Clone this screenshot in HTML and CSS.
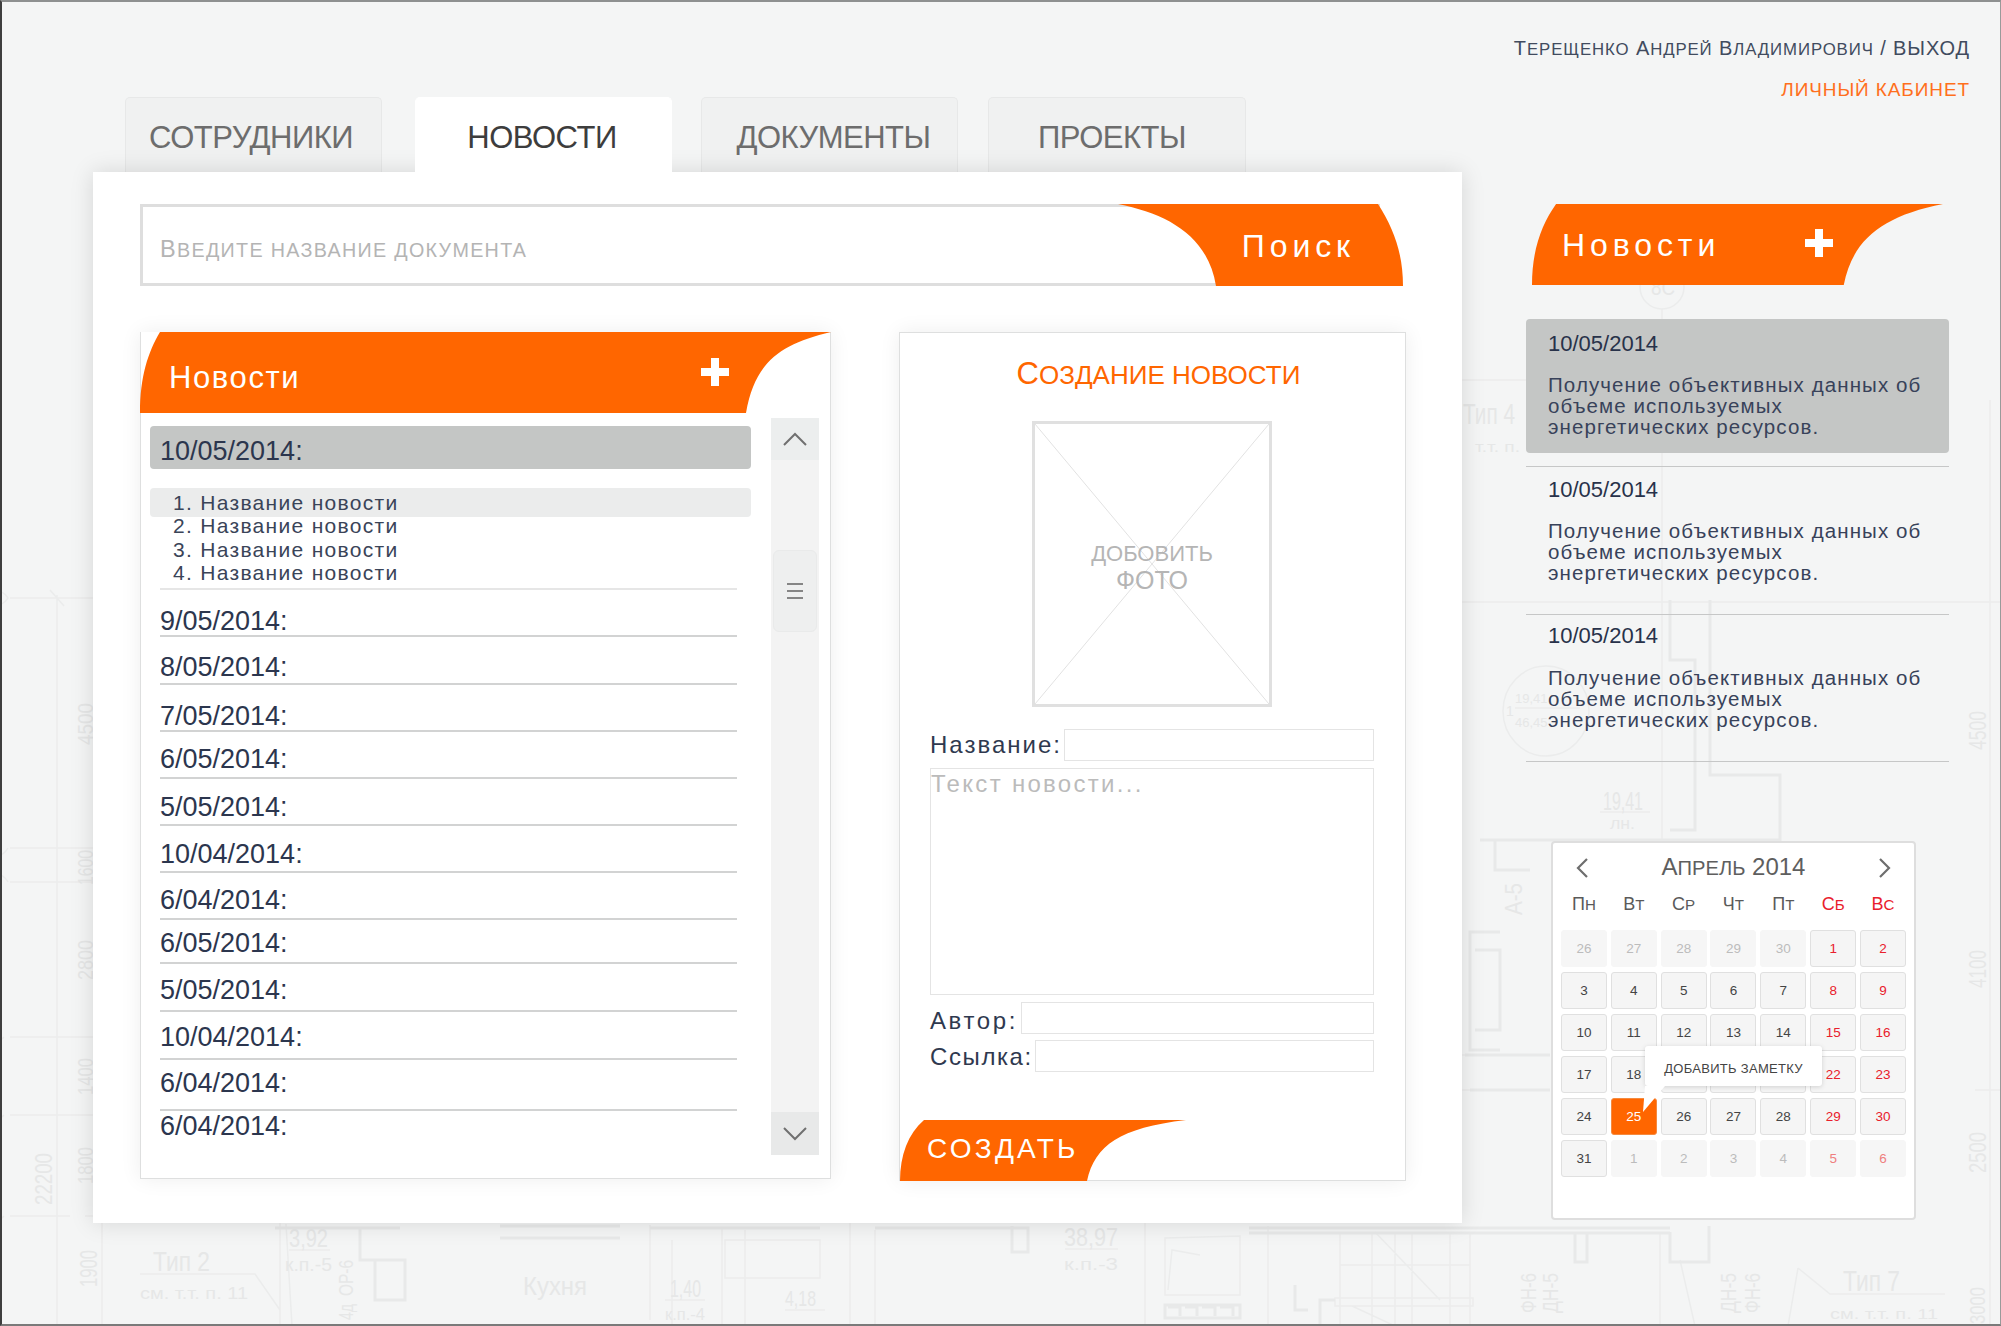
FILE: index.html
```html
<!DOCTYPE html>
<html lang="ru">
<head>
<meta charset="utf-8">
<title>Новости</title>
<link rel="stylesheet" href="styles.css">
</head>
<body>
<div class="page">
  <svg class="blueprint" viewBox="0 0 2001 1326" aria-hidden="true">
    <g class="bp-line">
      <path d="M57 595V1326M10 598H150M10 848H150M10 882H150M10 1037H150M10 1115H150M10 1216H70M85 1216H150M50 590L64 606"/>
      <path d="M-12 598a14 22 0 0 0 20 0a14 22 0 0 0-20 0M-12 848a14 24 0 0 0 20 0M-12 882a14 24 0 0 1 20 0M-6 1037a10 20 0 0 0 10 0M-6 1115a10 20 0 0 0 10 0M-6 1216a10 20 0 0 0 10 0"/>
      <path d="M102 1223V1326M140 1274H255L280 1310M280 1223V1326M286 1224L292 1326"/>
      <path d="M650 1225V1320M672 1240V1326M722 1228V1326M745 1230V1326M725 1240H820V1278H725ZM665 1300H705M785 1310H825M850 1223V1326M875 1230V1326"/>
      <path d="M289 1250H330M1065 1249H1118M1145 1223V1326M1165 1238L1240 1236V1295H1165ZM1200 1255L1172 1250L1168 1290M1268 1226V1326M1340 1232V1326M1372 1232V1326M1395 1232V1326M1412 1232V1326M1450 1232V1326M1470 1232V1326M1375 1232L1440 1300M1340 1265H1470M1335 1298H1473V1306H1335ZM1352 1306L1395 1326"/>
      <path d="M1798 1268L1830 1294H1945M1798 1268L1788 1326M1660 1232V1326M1680 1260L1695 1326M1990 1220V1326"/>
      <path d="M1662 309V880M1640 287a22 22 0 1 0 44 0a22 22 0 1 0-44 0M1503 711a43 45 0 1 0 86 0a43 45 0 1 0-86 0M1515 708H1580M1462 380H1540M1462 602H1990M1990 400V1240M1975 602H2000M1975 1090H2000"/>
      <path d="M1600 812H1650M1460 1090H1530M1460 1055H1550"/>
    </g>
    <g class="bp-wall">
      <path d="M1670 600V660H1695V830H1670M1710 600V775H1780V842M1480 840H1780M1495 840V870H1530M1465 1055H1550M1470 1090H1550"/>
      <path d="M1500 932H1470V1050H1500M1475 950H1500V1030H1475"/>
      <path d="M275 1228H400M500 1226H620M500 1238H620M650 1228H820M875 1228H1000M1000 1228H1028V1252H1012V1226M1249 1233H1670M1249 1228H1670M1575 1232V1262H1587V1232M1670 1232V1262H1709V1226M1295 1285V1310H1308"/>
      <path d="M360 1228V1260H375M375 1260H405V1300H375V1260M1320 1326V1300H1335"/>
      <path d="M1165 1305H1240V1318H1165ZM1168 1307H1180V1316M1185 1307H1197V1316M1202 1307H1215V1316M1220 1307H1233V1316"/>
    </g>
    <g class="bp-text">
      <text x="-745" y="93" transform="rotate(-90)" font-size="22" textLength="42" lengthAdjust="spacingAndGlyphs">4500</text>
      <text x="-885" y="93" transform="rotate(-90)" font-size="22" textLength="35" lengthAdjust="spacingAndGlyphs">1600</text>
      <text x="-980" y="93" transform="rotate(-90)" font-size="22" textLength="40" lengthAdjust="spacingAndGlyphs">2800</text>
      <text x="-1095" y="93" transform="rotate(-90)" font-size="22" textLength="37" lengthAdjust="spacingAndGlyphs">1400</text>
      <text x="-1184" y="93" transform="rotate(-90)" font-size="22" textLength="37" lengthAdjust="spacingAndGlyphs">1800</text>
      <text x="-1205" y="52" transform="rotate(-90)" font-size="24" textLength="52" lengthAdjust="spacingAndGlyphs">22200</text>
      <text x="-1287" y="97" transform="rotate(-90)" font-size="24" textLength="37" lengthAdjust="spacingAndGlyphs">1900</text>
      <text x="153" y="1271" font-size="28" textLength="57" lengthAdjust="spacingAndGlyphs">Тип 2</text>
      <text x="140" y="1299" font-size="16" textLength="108" lengthAdjust="spacingAndGlyphs">см. т.т. п. 11</text>
      <text x="289" y="1247" font-size="26" textLength="39" lengthAdjust="spacingAndGlyphs">3,92</text>
      <text x="285" y="1271" font-size="19" textLength="47" lengthAdjust="spacingAndGlyphs">к.п.-5</text>
      <text x="-1296" y="353" transform="rotate(-90)" font-size="20" textLength="36" lengthAdjust="spacingAndGlyphs">ОР-6</text>
      <text x="-1320" y="353" transform="rotate(-90)" font-size="20" textLength="16" lengthAdjust="spacingAndGlyphs">4д</text>
      <text x="523" y="1295" font-size="26" textLength="64" lengthAdjust="spacingAndGlyphs">Кухня</text>
      <text x="670" y="1297" font-size="23" textLength="31" lengthAdjust="spacingAndGlyphs">1,40</text>
      <text x="665" y="1320" font-size="16" textLength="40" lengthAdjust="spacingAndGlyphs">к.п.-4</text>
      <text x="785" y="1306" font-size="22" textLength="31" lengthAdjust="spacingAndGlyphs">4,18</text>
      <text x="1064" y="1246" font-size="25" textLength="54" lengthAdjust="spacingAndGlyphs">38,97</text>
      <text x="1064" y="1270" font-size="17" textLength="54" lengthAdjust="spacingAndGlyphs">к.п.-3</text>
      <text x="-1313" y="1536" transform="rotate(-90)" font-size="22" textLength="40" lengthAdjust="spacingAndGlyphs">ФН-6</text>
      <text x="-1313" y="1558" transform="rotate(-90)" font-size="22" textLength="40" lengthAdjust="spacingAndGlyphs">ДН-5</text>
      <text x="-1313" y="1736" transform="rotate(-90)" font-size="22" textLength="40" lengthAdjust="spacingAndGlyphs">ДН-5</text>
      <text x="-1313" y="1760" transform="rotate(-90)" font-size="22" textLength="40" lengthAdjust="spacingAndGlyphs">ФН-6</text>
      <text x="1843" y="1291" font-size="30" textLength="57" lengthAdjust="spacingAndGlyphs">Тип 7</text>
      <text x="1830" y="1319" font-size="15" textLength="108" lengthAdjust="spacingAndGlyphs">см. т.т. п. 11</text>
      <text x="-1324" y="1985" transform="rotate(-90)" font-size="22" textLength="37" lengthAdjust="spacingAndGlyphs">3000</text>
      <text x="1651" y="295" font-size="22" textLength="24" lengthAdjust="spacingAndGlyphs">8С</text>
      <text x="1463" y="424" font-size="30" textLength="52" lengthAdjust="spacingAndGlyphs">Тип 4</text>
      <text x="1475" y="452" font-size="15" textLength="45" lengthAdjust="spacingAndGlyphs">т.т. п.</text>
      <text x="1506" y="716" font-size="14">1</text>
      <text x="1515" y="703" font-size="13">19,41</text>
      <text x="1515" y="727" font-size="13">46,45</text>
      <text x="1603" y="810" font-size="26" textLength="40" lengthAdjust="spacingAndGlyphs">19,41</text>
      <text x="1610" y="829" font-size="16" textLength="25" lengthAdjust="spacingAndGlyphs">лн.</text>
      <text x="-750" y="1986" transform="rotate(-90)" font-size="24" textLength="39" lengthAdjust="spacingAndGlyphs">4500</text>
      <text x="-988" y="1986" transform="rotate(-90)" font-size="24" textLength="38" lengthAdjust="spacingAndGlyphs">4100</text>
      <text x="-1173" y="1986" transform="rotate(-90)" font-size="24" textLength="41" lengthAdjust="spacingAndGlyphs">2500</text>
      <text x="-915" y="1522" transform="rotate(-90)" font-size="24" textLength="32" lengthAdjust="spacingAndGlyphs">А-5</text>
    </g>
  </svg>

  <div class="main-col">
    <nav class="tabs">
      <a class="tab tab--first">СОТРУДНИКИ</a>
      <a class="tab tab--active">НОВОСТИ</a>
      <a class="tab tab--third">ДОКУМЕНТЫ</a>
      <a class="tab tab--last">ПРОЕКТЫ</a>
    </nav>
    <main class="panel">
      <div class="search">
        <div class="search-field"><span class="placeholder">В<span class="sm">ВЕДИТЕ НАЗВАНИЕ ДОКУМЕНТА</span></span></div>
        <div class="search-btn">
          <svg class="shape" viewBox="0 0 285 82" preserveAspectRatio="none"><path d="M0 0H260C276 25 285 50 285 82H98C90 32 50 10 0 0Z"/></svg>
          <span class="btn-label search-label">Поиск</span>
        </div>
      </div>
      <div class="columns">
        <section class="news-list">
          <header class="list-head">
            <svg class="shape" viewBox="0 0 691 81" preserveAspectRatio="none"><path d="M20 0H691C640 12 615 30 606 81H0C0 45 8 20 20 0Z"/></svg>
            <h2 class="list-title">Новости</h2>
            <svg class="plus" viewBox="0 0 28 28"><path d="M10 0H18V10H28V18H18V28H10V18H0V10H10Z"/></svg>
          </header>
          <div class="list-body">
            <div class="dates">
              <div class="date-sel">10/05/2014:</div>
              <ol class="sub">
                <li class="sub-item sub-item--on">1. Название новости</li>
                <li class="sub-item">2. Название новости</li>
                <li class="sub-item">3. Название новости</li>
                <li class="sub-item">4. Название новости</li>
              </ol>
              <div class="row rh47 pt16">9/05/2014:</div>
              <div class="row rh48 pt15">8/05/2014:</div>
              <div class="row rh47 pt16">7/05/2014:</div>
              <div class="row rh47 pt12">6/05/2014:</div>
              <div class="row rh47 pt13">5/05/2014:</div>
              <div class="row rh47 pt13">10/04/2014:</div>
              <div class="row rh47 pt12">6/04/2014:</div>
              <div class="row rh44 pt8">6/05/2014:</div>
              <div class="row rh48 pt11">5/05/2014:</div>
              <div class="row rh48 pt10">10/04/2014:</div>
              <div class="row rh51 pt8">6/04/2014:</div>
              <div class="row row--last">6/04/2014:</div>
            </div>
            <div class="scroll">
              <div class="scroll-btn">
                <svg class="chev" viewBox="0 0 24 14"><path d="M1 13L12 2L23 13"/></svg>
              </div>
              <div class="thumb"><i class="grip"></i><i class="grip"></i><i class="grip"></i></div>
              <div class="scroll-btn scroll-btn--down">
                <svg class="chev" viewBox="0 0 24 14"><path d="M1 1L12 12L23 1"/></svg>
              </div>
            </div>
          </div>
        </section>

        <section class="form">
          <h2 class="form-title">С<span class="sm">ОЗДАНИЕ НОВОСТИ</span></h2>
          <div class="photo">
            <svg class="photo-x" viewBox="0 0 100 100" preserveAspectRatio="none"><path d="M0 0L100 100M100 0L0 100"/></svg>
            <span class="photo-text">ДОБОВИТЬ<br><span class="photo-big">ФОТО</span></span>
          </div>
          <div class="field field--first"><label class="lbl">Название:</label><div class="inp"></div></div>
          <div class="area">Текст новости...</div>
          <div class="field field--a"><label class="lbl">Автор:</label><div class="inp"></div></div>
          <div class="field field--b"><label class="lbl">Ссылка:</label><div class="inp"></div></div>
          <div class="create">
            <svg class="shape" viewBox="0 0 286 61" preserveAspectRatio="none"><path d="M24 0H286C220 8 195 25 187 61H0C0 35 8 14 24 0Z"/></svg>
            <span class="btn-label create-label">СОЗДАТЬ</span>
          </div>
        </section>
      </div>
    </main>
  </div>

  <aside class="side">
    <div class="user">Т<span class="sm">ЕРЕЩЕНКО</span> А<span class="sm">НДРЕЙ</span> В<span class="sm">ЛАДИМИРОВИЧ</span> / ВЫХОД</div>
    <div class="cabinet">ЛИЧНЫЙ КАБИНЕТ</div>
    <div class="side-head">
      <svg class="shape" viewBox="0 0 410 81" preserveAspectRatio="none"><path d="M24 0H410C350 12 320 35 311 81H0C0 45 10 20 24 0Z"/></svg>
      <h2 class="side-title">Новости</h2>
      <svg class="plus side-plus" viewBox="0 0 28 28"><path d="M10 0H18V10H28V18H18V28H10V18H0V10H10Z"/></svg>
    </div>
    <article class="card card--on">
      <div class="card-date">10/05/2014</div>
      <p class="card-text">Получение объективных данных об объеме используемых энергетических ресурсов.</p>
    </article>
    <article class="card card--two">
      <div class="card-date">10/05/2014</div>
      <p class="card-text">Получение объективных данных об объеме используемых энергетических ресурсов.</p>
    </article>
    <article class="card card--three">
      <div class="card-date">10/05/2014</div>
      <p class="card-text">Получение объективных данных об объеме используемых энергетических ресурсов.</p>
    </article>

    <div class="calendar">
      <div class="cal-nav">
        <svg class="cal-arrow" viewBox="0 0 14 22"><path d="M12 2L3 11L12 20"/></svg>
        <div class="cal-title">А<span class="sm">ПРЕЛЬ</span> 2014</div>
        <svg class="cal-arrow" viewBox="0 0 14 22"><path d="M2 2L11 11L2 20"/></svg>
      </div>
      <div class="cal-grid cal-week">
        <span>П<span class="sm">Н</span></span><span>В<span class="sm">Т</span></span><span>С<span class="sm">Р</span></span><span>Ч<span class="sm">Т</span></span><span>П<span class="sm">Т</span></span><span class="red">С<span class="sm">Б</span></span><span class="red">В<span class="sm">С</span></span>
      </div>
      <div class="cal-grid cal-days">
        <span class="d off">26</span><span class="d off">27</span><span class="d off">28</span><span class="d off">29</span><span class="d off">30</span><span class="d red">1</span><span class="d red">2</span>
        <span class="d">3</span><span class="d">4</span><span class="d">5</span><span class="d">6</span><span class="d">7</span><span class="d red">8</span><span class="d red">9</span>
        <span class="d">10</span><span class="d">11</span><span class="d">12</span><span class="d">13</span><span class="d">14</span><span class="d red">15</span><span class="d red">16</span>
        <span class="d">17</span><span class="d">18</span><span class="d"></span><span class="d"></span><span class="d"></span><span class="d red">22</span><span class="d red">23</span>
        <span class="d">24</span><span class="d d--on">25</span><span class="d">26</span><span class="d">27</span><span class="d">28</span><span class="d red">29</span><span class="d red">30</span>
        <span class="d">31</span><span class="d off">1</span><span class="d off">2</span><span class="d off">3</span><span class="d off">4</span><span class="d off off-red">5</span><span class="d off off-red">6</span>
      </div>
      <div class="tip">ДОБАВИТЬ ЗАМЕТКУ</div>
    </div>
  </aside>
</div>
</body>
</html>
```

FILE: styles.css
```css
* { box-sizing: border-box; }
html, body { margin: 0; padding: 0; }
body {
  width: 2001px;
  height: 1326px;
  overflow: hidden;
  font-family: "Liberation Sans", Arial, sans-serif;
  color: #2c364e;
}
h2, p, ol { margin: 0; padding: 0; font-weight: normal; }
li { list-style: none; }

.page {
  position: relative;
  display: flex;
  width: 2001px;
  height: 1326px;
  background: #f4f5f5;
  border-top: 2px solid #8e9090;
  border-left: 2px solid #3e3e3e;
  border-bottom: 2px solid #7a7a7a;
  border-right: 1px solid #9a9a9a;
  overflow: hidden;
}

/* blueprint backdrop */
.blueprint { position: absolute; left: -2px; top: -2px; width: 2001px; height: 1326px; }
.bp-line { fill: none; stroke: #ebecec; stroke-width: 1.5; }
.bp-wall { fill: none; stroke: #e8e9e9; stroke-width: 3; }
.bp-text { fill: #e6e7e7; font-family: "Liberation Sans", sans-serif; }

/* main column */
.main-col { position: relative; width: 1369px; margin-left: 91px; padding-top: 95px; flex: none; }
.tabs { display: flex; gap: 29px; height: 75px; padding-left: 32px; align-items: flex-end; }
.tab {
  display: flex; align-items: center; justify-content: center;
  width: 257px; height: 75px; padding-top: 5px;
  background: #f0f1f1;
  border: 1px solid #e7e8e8; border-bottom: 0;
  border-radius: 5px 5px 0 0;
  font-size: 31px; letter-spacing: -.5px; color: #6d6d6d;
}
.tab--first { padding-right: 5px; }
.tab--active {
  position: relative; z-index: 3;
  margin-left: 4px; padding-right: 3px;
  background: #fff; border-color: #fff;
  color: #3d3d3d;
}
.tab--third { padding-left: 8px; }
.tab--last { width: 258px; margin-left: 1px; padding-right: 10px; }
.panel {
  position: relative; z-index: 2;
  width: 1369px; height: 1051px;
  padding: 32px 0 0 47px;
  background: #fff;
  box-shadow: 0 0 22px rgba(0, 0, 0, .13);
}

.shape { position: absolute; left: 0; top: 0; width: 100%; height: 100%; fill: #ff6600; }
.btn-label { position: relative; color: #fff; font-size: 30px; }
.sm { font-size: .84em; }

.search { position: relative; width: 1263px; height: 82px; }
.search-field {
  display: flex; align-items: center;
  width: 1240px; height: 82px; padding: 8px 0 0 17px;
  border: 3px solid #dedede; border-right: 0;
}
.placeholder { font-size: 23.5px; letter-spacing: 1.3px; color: #b4b4b4; }
.search-btn {
  position: absolute; right: 0; top: 0;
  display: flex; align-items: center; justify-content: flex-end;
  width: 285px; height: 82px; padding: 2px 48px 0 0;
}
.search-label { font-size: 32px; letter-spacing: 4.9px; }

.columns { display: flex; gap: 68px; margin-top: 46px; }

/* news list */
.news-list {
  width: 691px; height: 847px;
  background: #fff;
  border: 1px solid #dedfdf; border-top: 0;
  box-shadow: 0 0 20px rgba(0, 0, 0, .07);
}
.list-head { position: relative; display: flex; align-items: center; height: 81px; margin-left: -1px; margin-right: -1px; padding: 10px 0 0 29px; }
.list-title { position: relative; font-size: 31px; letter-spacing: 1.6px; color: #fff; }
.plus { position: absolute; fill: #fff; width: 28px; height: 28px; left: 561px; top: 26px; }
.list-body { display: flex; padding-left: 9px; }
.dates { width: 601px; padding-top: 13px; }
.date-sel {
  height: 43px; padding: 8px 0 0 10px;
  background: #c4c6c5; border-radius: 4px;
  font-size: 27px; line-height: 35px;
}
.sub { margin: 22px 0 0 10px; width: 577px; height: 99px; border-bottom: 2px solid #e6e6e6; }
.sub-item {
  position: relative; padding-left: 13px;
  height: 23.4px; line-height: 23.4px;
  font-size: 21px; letter-spacing: 1.3px; color: #3a4458;
}
.sub-item--on { isolation: isolate; }
.sub-item--on::before {
  content: ""; position: absolute; z-index: -1;
  left: -10px; width: 601px; top: -3px; height: 29px;
  background: #ebecec; border-radius: 4px;
}
.row {
  margin-left: 10px; width: 577px;
  font-size: 27px; line-height: 30px;
  border-bottom: 2px solid #d2d3d3;
}
.row--last { border-bottom: 0; }
.rh44 { height: 44px; } .rh47 { height: 47px; } .rh48 { height: 48px; } .rh51 { height: 51px; }
.pt8 { padding-top: 8px; } .pt10 { padding-top: 10px; } .pt11 { padding-top: 11px; } .pt12 { padding-top: 12px; }
.pt13 { padding-top: 13px; } .pt15 { padding-top: 15px; } .pt16 { padding-top: 16px; }

.scroll {
  display: flex; flex-direction: column;
  width: 48px; height: 737px; margin: 5px 0 0 20px;
  background: #f3f3f3;
}
.scroll-btn { display: flex; align-items: center; justify-content: center; height: 42px; background: #eceeee; flex: none; }
.scroll-btn--down { height: 43px; margin-top: auto; background: #e8e9e9; }
.chev { width: 24px; height: 14px; fill: none; stroke: #707070; stroke-width: 2; }
.thumb {
  display: flex; flex-direction: column; align-items: center; justify-content: center; gap: 5px;
  width: 44px; height: 82px; margin: 90px 0 0 2px;
  background: #eeefef; border: 1px solid #e9eaea; border-radius: 6px;
}
.grip { display: block; width: 16px; height: 2px; background: #858585; }

/* form */
.form {
  display: flex; flex-direction: column;
  width: 507px; height: 849px; padding: 0 31px 0 30px;
  background: #fff;
  border: 1px solid #dedfdf;
  box-shadow: 0 0 20px rgba(0, 0, 0, .07);
}
.form-title { margin: 21px 0 0 13px; height: 40px; line-height: 40px; text-align: center; font-size: 31px; color: #ff6600; white-space: nowrap; }
.photo {
  position: relative;
  display: flex; align-items: center; justify-content: center;
  width: 240px; height: 286px; margin: 27px 0 0 102px;
  border: 3px solid #e0e0e0;
  text-align: center;
}
.photo-x { position: absolute; left: 0; top: 0; width: 100%; height: 100%; fill: none; stroke: #e2e2e2; stroke-width: 1; }
.photo-x path { vector-effect: non-scaling-stroke; }
.photo-text { position: relative; font-size: 22px; line-height: 27px; color: #b5b5b5; margin-top: 6px; }
.photo-big { font-size: 25px; }
.field { display: flex; height: 32px; align-items: center; }
.field--first { margin-top: 22px; }
.field--a { margin-top: 7px; }
.field--b { margin-top: 6px; }
.lbl { font-size: 24px; letter-spacing: 2px; color: #2f394f; white-space: nowrap; margin-right: 2px; }
.inp { flex: 1; height: 32px; background: #fff; border: 1px solid #e4e4e4; }
.field--a .lbl { padding-top: 5px; letter-spacing: 2.6px; margin-right: 3px; }
.field--b .lbl { padding-top: 2px; letter-spacing: 1.6px; margin-right: 2px; }
.area {
  height: 227px; margin-top: 7px;
  border: 1px solid #e4e4e4;
  font-size: 24px; line-height: 30px; letter-spacing: 2.3px; color: #bbb;
}
.create {
  position: relative;
  display: flex; align-items: center;
  align-self: flex-start;
  width: 286px; height: 61px; margin: auto 0 -1px -30px; padding: 0 0 4px 27px;
}
.create-label { font-size: 28px; letter-spacing: 3.2px; }

/* side column */
.side { width: 444px; margin-left: 64px; padding-top: 32px; flex: none; position: relative; }
.user { height: 28px; line-height: 28px; margin-left: -40px; text-align: right; font-size: 20px; letter-spacing: .9px; color: #414b5e; white-space: nowrap; }
.cabinet { height: 28px; line-height: 28px; margin-top: 14px; text-align: right; font-size: 19px; letter-spacing: .9px; color: #ff6f1c; white-space: nowrap; }
.side-head { position: relative; display: flex; align-items: center; width: 411px; height: 81px; margin: 100px 0 0 6px; padding: 2px 0 0 30px; }
.side-title { position: relative; font-size: 32px; letter-spacing: 4.9px; color: #fff; }
.side-plus { left: 273px; top: 25px; }
.card { width: 423px; padding-left: 22px; border-bottom: 1px solid #c6c7c7; }
.card--on { height: 134px; margin-top: 34px; padding-top: 14px; background: #c4c6c5; border: 0; border-radius: 4px; }
.card--two { height: 149px; margin-top: 13px; padding-top: 12px; border-top: 1px solid #c6c7c7; }
.card--three { height: 147px; padding-top: 10px; }
.card-date { height: 22px; line-height: 22px; font-size: 22px; color: #28324a; }
.card-text { margin-top: 19px; font-size: 20.5px; line-height: 21px; letter-spacing: 1.1px; color: #38425a; width: 395px; }
.card--three .card-text { margin-top: 20px; }

/* calendar */
.calendar {
  position: relative;
  width: 365px; height: 379px; margin: 79px 0 0 25px; padding: 0 8px;
  background: #fff;
  border: 2px solid #dedede; border-radius: 4px;
}
.cal-nav { display: flex; align-items: center; justify-content: space-between; height: 44px; padding: 4px 14px 0; }
.cal-arrow { width: 14px; height: 22px; fill: none; stroke: #6e6e6e; stroke-width: 2.2; flex: none; margin-top: 2px; }
.cal-title { font-size: 24px; color: #5e5e5e; white-space: nowrap; }
.cal-grid { display: grid; grid-template-columns: repeat(7, 46px); column-gap: 3.83px; width: 345px; }
.cal-week { height: 44px; padding-top: 7px; text-align: center; font-size: 18px; color: #5a5a5a; }
.cal-days { grid-auto-rows: 37px; row-gap: 5px; margin-top: -1px; }
.d {
  display: flex; align-items: center; justify-content: center;
  background: #f5f5f5; border: 1px solid #e0e0e0; border-radius: 3px;
  font-size: 13.5px; color: #444;
}
.red { color: #e9202c; }
.off { background: #f6f6f6; border-color: #f6f6f6; color: #bcbcbc; }
.off-red { color: #ef7f7f; }
.d--on { background: #ff6600; border-color: #f58a3f; color: #fff; }
.tip {
  position: absolute; left: 92px; top: 203px;
  display: flex; align-items: center; justify-content: center;
  width: 177px; height: 40px; padding-top: 4px;
  background: #fff; border-radius: 3px;
  box-shadow: 0 1px 5px rgba(0, 0, 0, .15);
  font-size: 13px; letter-spacing: .3px; color: #444;
}
.tip::after {
  content: ""; position: absolute; left: -2px; top: 40px;
  width: 22px; height: 26px;
  background: #fff;
  clip-path: polygon(2px 0, 22px 0, 0 100%);
}
```
